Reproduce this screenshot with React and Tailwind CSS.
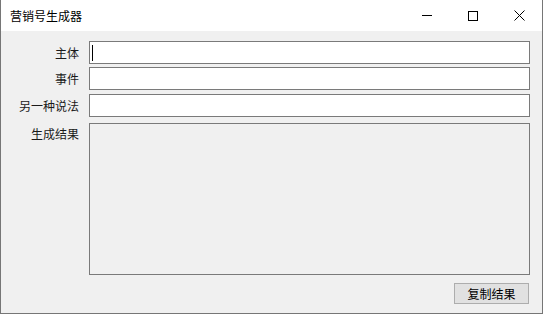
import React from 'react';

const font = { fontFamily: '"Noto Sans CJK SC", "Noto Sans", sans-serif' };

const Field = ({ label, caret, mt }) => (
  <div className={`flex items-center ${mt}`}>
    <div className="w-[78px] shrink-0 text-right text-[12px] text-[#1a1a1a] leading-none">{label}</div>
    <div className="ml-[10px] w-[441px] h-[23px] border border-[#7a7a7a] bg-white flex items-center pl-[2px]">
      {caret && <div className="w-px h-[16px] bg-black"></div>}
    </div>
  </div>
);

const App = () => {
  return (
    <div className="w-[543px] h-[315px] bg-white" style={font}>
      <div className="w-[543px] h-[314px] border-l border-r border-b border-[#767676] bg-[#f0f0f0] flex flex-col">
        {/* title bar */}
        <div className="h-[31px] bg-white flex items-center shrink-0">
          <div className="ml-[9px] text-[12px] text-black">营销号生成器</div>
          <div className="ml-auto flex h-full">
            <div className="w-[46px] h-full flex items-center justify-center">
              <div className="w-[10px] h-px bg-black"></div>
            </div>
            <div className="w-[46px] h-full flex items-center justify-center">
              <div className="w-[10px] h-[10px] border border-black"></div>
            </div>
            <div className="w-[46px] h-full flex items-center justify-center">
              <svg width="11" height="11" viewBox="0 0 11 11">
                <path d="M0.5 0.5 L10.5 10.5 M10.5 0.5 L0.5 10.5" stroke="#000" strokeWidth="1" />
              </svg>
            </div>
          </div>
        </div>

        {/* form */}
        <div className="flex flex-col pt-[10px]">
          <Field label="主体" caret mt="" />
          <Field label="事件" mt="mt-[3px]" />
          <Field label="另一种说法" mt="mt-[4px]" />
          <div className="flex mt-[6px]">
            <div className="w-[78px] shrink-0 text-right text-[12px] text-[#1a1a1a] pt-[2px]">生成结果</div>
            <div className="ml-[10px] w-[441px] h-[152px] border border-[#7a7a7a] bg-[#f0f0f0]"></div>
          </div>
          <div className="flex mt-[8px]">
            <button className="ml-[453px] w-[75px] h-[21px] border border-[#adadad] bg-[#e1e1e1] text-[12px] text-black flex items-center justify-center">
              复制结果
            </button>
          </div>
        </div>
      </div>
    </div>
  );
};

export default App;
